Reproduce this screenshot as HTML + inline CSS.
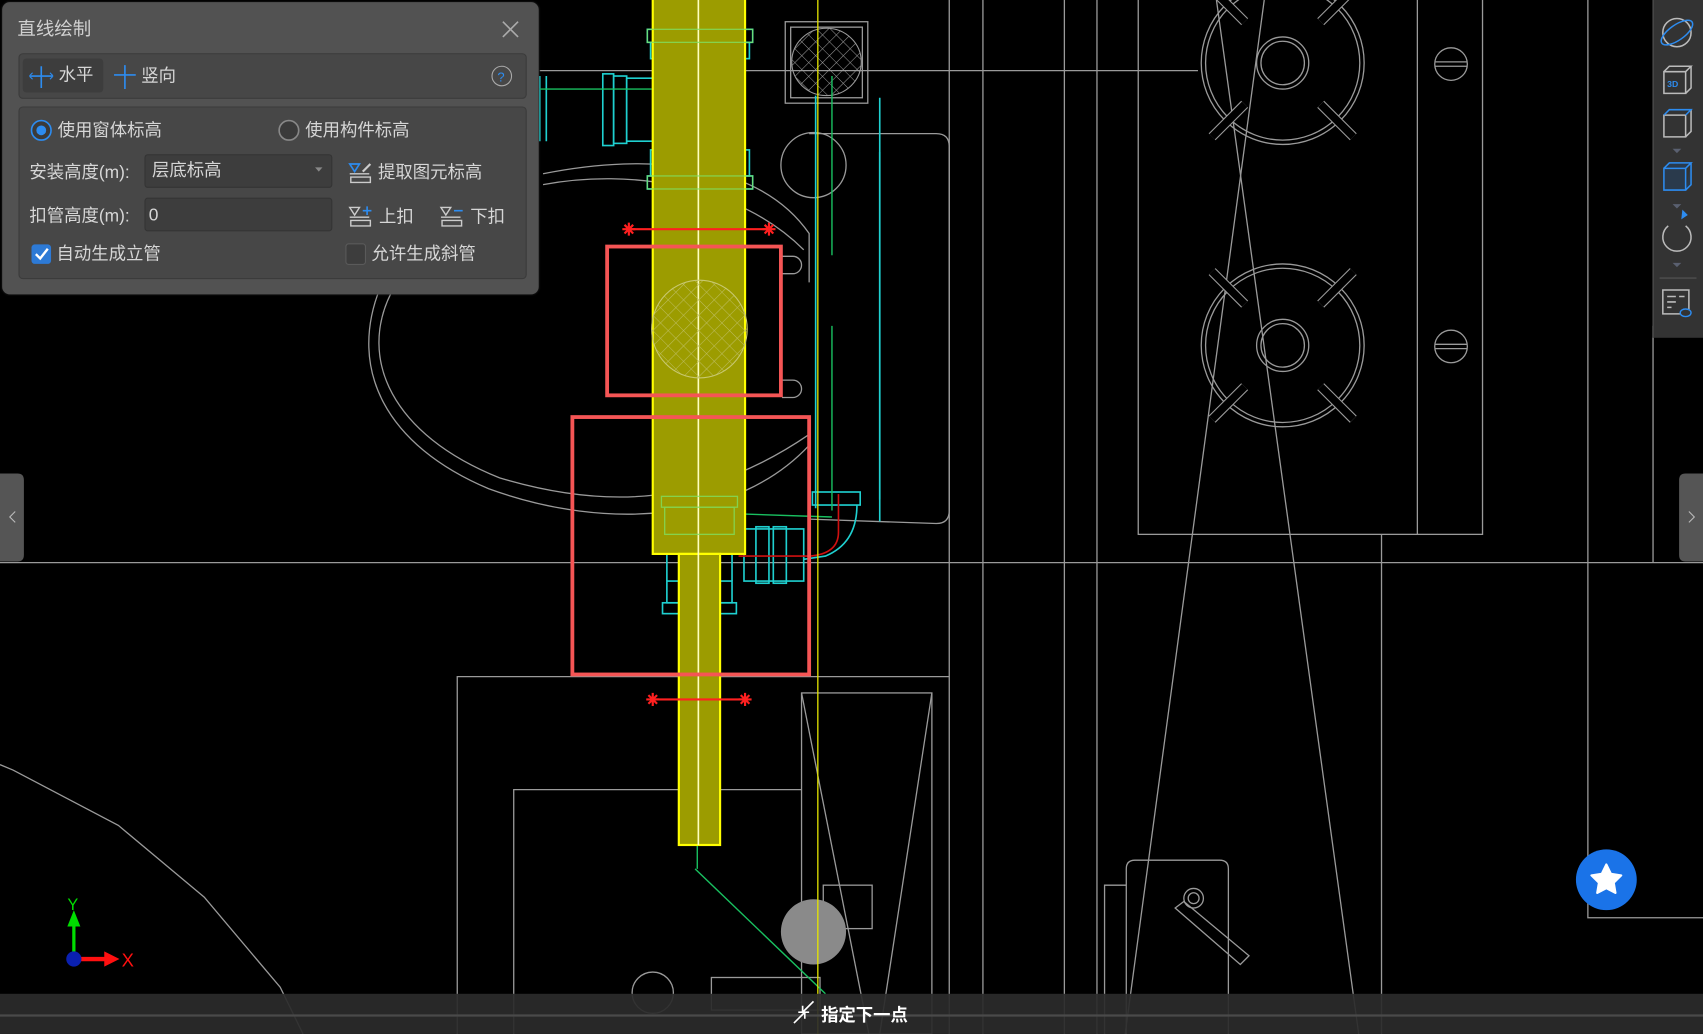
<!DOCTYPE html>
<html><head><meta charset="utf-8"><style>
html,body{margin:0;padding:0;background:#000;overflow:hidden;width:1703px;height:1034px}
#root{position:absolute;left:0;top:0;width:1568px;height:952px;transform:scale(1.08610);transform-origin:0 0;font-family:"Liberation Sans","Noto Sans CJK SC",sans-serif}
.abs{position:absolute}
#dlg{left:2px;top:2px;width:494px;height:269px;background:#525252;border-radius:7px;box-shadow:0 0 2px #222}
.box{position:absolute;left:15px;width:466px;background:#474747;border:1px solid #3b3b3b;border-radius:4px}
.t{position:absolute;color:#d6d6d6;font-size:16px;white-space:nowrap;line-height:20px}
.inp{position:absolute;background:#3d3d3d;border:1px solid #343434;border-radius:3px;height:29px}
</style></head><body><div id="root">
<svg class="abs" style="left:0;top:0" width="1568" height="952" viewBox="0 0 1568 952">
<defs>
<pattern id="hatch" width="10" height="10" patternUnits="userSpaceOnUse" patternTransform="rotate(45)">
<path d="M0 0H10M0 0V10" stroke="#bdbd60" stroke-width="1"/></pattern>
<pattern id="hatch2" width="9" height="9" patternUnits="userSpaceOnUse" patternTransform="rotate(45)">
<path d="M0 0H9M0 0V9" stroke="#999" stroke-width="1"/></pattern>
</defs>
<g stroke="#9a9a9a" stroke-width="1.2" fill="none">
<line x1="0" y1="518" x2="1568" y2="518"/>
<line x1="497" y1="65" x2="1103" y2="65"/>
<line x1="874" y1="0" x2="874" y2="952"/>
<line x1="905" y1="0" x2="905" y2="952"/>
<line x1="980" y1="0" x2="980" y2="952"/>
<line x1="1010" y1="0" x2="1010" y2="952"/>
<rect x="1048" y="-2" width="317" height="494"/>
<line x1="1305" y1="0" x2="1305" y2="492"/>
<line x1="1272" y1="492" x2="1272" y2="952"/>
<polyline points="1462,0 1462,845 1568,845"/>
<line x1="1522" y1="300" x2="1522" y2="518"/>
<line x1="1120" y1="0" x2="1251" y2="952"/>
<line x1="1164" y1="0" x2="1036" y2="952"/>
<circle cx="1181" cy="58" r="75"/><circle cx="1181" cy="58" r="71"/>
<circle cx="1181" cy="58" r="24"/><circle cx="1181" cy="58" r="20"/>
<circle cx="1181" cy="318" r="75"/><circle cx="1181" cy="318" r="71"/>
<circle cx="1181" cy="318" r="24"/><circle cx="1181" cy="318" r="20"/>
<g stroke-width="9" stroke="#9a9a9a"><path d="M1116 250l30 30M1246 250l-30 30M1116 386l30-30M1246 386l-30-30M1116 -10l30 30M1246 -10l-30 30M1116 126l30-30M1246 126l-30-30"/></g>
<g stroke-width="7" stroke="#000"><path d="M1116 250l30 30M1246 250l-30 30M1116 386l30-30M1246 386l-30-30M1116 -10l30 30M1246 -10l-30 30M1116 126l30-30M1246 126l-30-30"/></g>
<circle cx="1336" cy="59" r="15"/><path d="M1321 57h30M1321 61h30"/>
<circle cx="1336" cy="319" r="15"/><path d="M1321 317h30M1321 321h30"/>
<!-- left curves -->
<polyline points="0,704 12,709 109,760 188,826 258,909 279,952"/>
<path d="M500 160 C600 140 700 150 745 215 L745 260"/>
<path d="M500 170 C580 155 680 170 740 230"/>
<path d="M360 270 C330 330 360 400 460 440 C560 470 650 465 745 400"/>
<path d="M350 265 C320 340 355 410 450 450 C560 490 680 480 745 410"/>
<path d="M745 123 L862 123 Q874 123 874 135 L874 470 Q874 482 862 482 L745 478"/>
<circle cx="749" cy="152" r="30"/>
<path d="M720 236 h10 a8 8 0 0 1 0 16 h-10M720 350 h10 a8 8 0 0 1 0 16 h-10"/>
<rect x="723" y="20" width="76" height="75"/><rect x="728" y="25" width="66" height="65"/>
<polyline points="421,952 421,623 874,623"/>
<polyline points="473,952 473,727 738,727"/>
<rect x="738" y="638" width="120" height="314"/>
<line x1="738" y1="638" x2="800" y2="952"/><line x1="858" y1="638" x2="810" y2="952"/>
<circle cx="601" cy="914" r="19"/>
<rect x="655" y="900" width="100" height="30"/>
<rect x="758" y="815" width="45" height="40"/>
<path d="M1037 952 V800 Q1037 792 1045 792 H1123 Q1131 792 1131 800 V952"/>
<path d="M1017 952 V815 H1037"/>
<path d="M1090 830 l60 50 l-8 8 l-60 -52z"/><circle cx="1099" cy="827" r="9"/><circle cx="1099" cy="827" r="5"/>
</g>
<ellipse cx="761" cy="57" rx="32" ry="31" fill="url(#hatch2)" stroke="#999"/>
<circle cx="749" cy="858" r="30" fill="#8a8a8a"/>
<!-- cyan parts -->
<g stroke="#1fd0d0" stroke-width="1.5" fill="none">
<rect x="596" y="27" width="97" height="12"/><rect x="599" y="39" width="91" height="15"/>
<rect x="596" y="162" width="97" height="12"/><rect x="599" y="138" width="91" height="24"/>
<rect x="555" y="68" width="10" height="66"/><rect x="565" y="70" width="12" height="62"/><rect x="577" y="72" width="25" height="58"/>
<line x1="497" y1="70" x2="497" y2="130"/><line x1="503" y1="70" x2="503" y2="130"/>
<line x1="810" y1="90" x2="810" y2="480"/>
<line x1="810" y1="140" x2="810" y2="460"/>
<line x1="751" y1="88" x2="751" y2="468"/>
<rect x="748" y="453" width="44" height="12"/>
<path d="M789 465 Q789 500 760 512 L740 515"/>
<rect x="609" y="457" width="70" height="10"/><rect x="612" y="467" width="64" height="25"/>
<rect x="610" y="555" width="68" height="10"/><rect x="614" y="535" width="60" height="20"/>
<line x1="614" y1="510" x2="614" y2="535"/><line x1="674" y1="510" x2="674" y2="535"/>
<rect x="685" y="487" width="55" height="48"/><rect x="696" y="485" width="12" height="52"/><rect x="712" y="485" width="12" height="52"/>
</g>
<g stroke="#19c060" stroke-width="1.3" fill="none">
<line x1="497" y1="82" x2="600" y2="82"/>
<line x1="766" y1="70" x2="766" y2="235"/><line x1="766" y1="300" x2="766" y2="470"/>
<line x1="640" y1="800" x2="760" y2="915"/><line x1="642" y1="778" x2="642" y2="800"/>
<line x1="676" y1="473" x2="766" y2="476"/>
</g>
<path d="M772 455 V490 Q772 510 745 512 H680" stroke="#d01010" stroke-width="1.5" fill="none"/>
<!-- yellow pipe -->
<rect x="601" y="-2" width="85" height="512" fill="#9c9c00" stroke="#ffff00" stroke-width="2"/>
<rect x="625" y="510" width="38" height="268" fill="#9c9c00" stroke="#ffff00" stroke-width="2"/>
<line x1="643" y1="0" x2="643" y2="778" stroke="#ffffc0" stroke-width="1.5"/>
<line x1="753" y1="0" x2="753" y2="952" stroke="#e6e600" stroke-width="1.2"/>
<ellipse cx="644" cy="303" rx="44" ry="45" fill="url(#hatch)" stroke="#c8c870"/>
<g stroke="#80e060" stroke-width="1.2" fill="none" opacity=".8">
<rect x="596" y="27" width="97" height="12"/><rect x="596" y="162" width="97" height="12"/>
<rect x="609" y="457" width="70" height="10"/><rect x="612" y="467" width="64" height="25"/>
</g>
<!-- red markers -->
<g stroke="#ff2020" stroke-width="2" fill="none">
<line x1="579" y1="211" x2="708" y2="211"/><line x1="601" y1="644" x2="686" y2="644"/>
<path d="M573 211h12M579 205v12M575 207l8 8M583 207l-8 8M702 211h12M708 205v12M704 207l8 8M712 207l-8 8"/>
<path d="M595 644h12M601 638v12M597 640l8 8M605 640l-8 8M680 644h12M686 638v12M682 640l8 8M690 640l-8 8"/>
</g>
<rect x="559" y="227" width="160" height="137" fill="none" stroke="#f55555" stroke-width="3.5"/>
<rect x="527" y="384" width="218" height="237" fill="none" stroke="#f55555" stroke-width="3.5"/>
<!-- axis -->
<line x1="68" y1="883" x2="68" y2="850" stroke="#00dd00" stroke-width="3"/>
<path d="M62 853 L68 838 L74 853z" fill="#00dd00"/>
<text x="62" y="838" fill="#00dd00" font-size="15" font-family="Liberation Sans">Y</text>
<line x1="68" y1="883" x2="98" y2="883" stroke="#ff1010" stroke-width="4"/>
<path d="M96 876 L110 883 L96 890z" fill="#ff1010"/>
<text x="112" y="890" fill="#ff1010" font-size="17" font-family="Liberation Sans">X</text>
<circle cx="68" cy="883" r="7" fill="#0a20b0"/>
<!-- bottom bar -->
<rect x="0" y="915" width="1568" height="37" fill="#2b2b2b" fill-opacity=".93"/>
<line x1="0" y1="935" x2="1568" y2="935" stroke="#4a4a4a" stroke-width="2"/>
<path d="M731 942 L741 932 M741 932 v6 M741 932 h-6 M749 922 L739 932 M739 932 v-6 M739 932 h6" stroke="#fff" stroke-width="1.5" fill="none"/>
<text x="756" y="940" fill="#fff" font-size="16" font-weight="bold" font-family="Liberation Sans,Noto Sans CJK SC,sans-serif">指定下一点</text>
<!-- side tabs -->
<path d="M0 436 H16 Q22 436 22 442 V511 Q22 517 16 517 H0z" fill="#555"/>
<path d="M14 471 l-5 5 l5 5" stroke="#bbb" fill="none"/>
<path d="M1568 436 H1552 Q1546 436 1546 442 V511 Q1546 517 1552 517 H1568z" fill="#555"/>
<path d="M1555 471 l5 5 l-5 5" stroke="#bbb" fill="none"/>
<!-- star button -->
<circle cx="1479" cy="810" r="28" fill="#1a73e8"/>
<path d="M1479 796 l4.2 8.6 9.5 1.4 -6.9 6.7 1.6 9.4 -8.4 -4.4 -8.4 4.4 1.6 -9.4 -6.9 -6.7 9.5 -1.4z" fill="#fff" stroke="#fff" stroke-width="2" stroke-linejoin="round"/>
<!-- right toolbar -->
<rect x="1522" y="0" width="46" height="311" fill="#333"/>
<line x1="1522" y1="0" x2="1522" y2="311" stroke="#555"/>
<g fill="none" stroke-width="1.4">
<ellipse cx="1544" cy="30" rx="13" ry="13" stroke="#bbb"/>
<ellipse cx="1544" cy="30" rx="17" ry="7" transform="rotate(-35 1544 30)" stroke="#2d8cf0" stroke-dasharray="0 0"/>
<path d="M1532 66 h20 v20 h-20z M1532 66 l5 -5 h20 l-5 5 M1557 61 v20 l-5 5" stroke="#bbb"/>
<path d="M1532 106 h20 v20 h-20z M1557 101 v20 l-5 5" stroke="#bbb"/><path d="M1532 106 l5 -5 h20 l-5 5" stroke="#2d8cf0"/>
<path d="M1532 155 h20 v20 h-20z M1532 155 l5 -5 h20 l-5 5 M1557 150 v20 l-5 5" stroke="#2d8cf0" fill="#2a3a4c"/>
<path d="M1552 208 a13 13 0 1 1 -16 0" stroke="#bbb"/>
<path d="M1531 267 h24 v22 h-24z M1535 273 h8 M1535 278 h8 M1535 283 h4 M1546 273 h5" stroke="#bbb"/>
</g>
<text x="1535" y="80" fill="#2d8cf0" font-size="8" font-weight="bold" font-family="Liberation Sans">3D</text>
<path d="M1548 202 l6 -4 -5 -5z" fill="#2d8cf0"/>
<ellipse cx="1552" cy="288" rx="5" ry="3.5" fill="#333" stroke="#2d8cf0" stroke-width="1.3"/>
<g fill="#5a6070"><path d="M1540 137 h8 l-4 4z M1540 188 h8 l-4 4z M1540 242 h8 l-4 4z"/></g>
<line x1="1528" y1="256" x2="1562" y2="256" stroke="#555"/>
</svg>

<div id="dlg" class="abs">
<div class="t" style="left:14px;top:15px;font-size:17px;color:#d0d0d0">直线绘制</div>
<svg class="abs" style="left:460px;top:17px" width="16" height="16"><path d="M1 1L15 15M15 1L1 15" stroke="#aaa" stroke-width="1.5"/></svg>
<div class="box" style="top:47px;height:40px">
 <div class="abs" style="left:3px;top:4px;width:74px;height:31px;background:#3d3d3d;border-radius:3px"></div>
 <svg class="abs" style="left:9px;top:10px" width="22" height="22"><path d="M1 10h20M11 1v20" stroke="#2d8cf0" stroke-width="1.5"/><path d="M3 7l-3 3 3 3M19 7l3 3-3 3" stroke="#2d8cf0" fill="none"/></svg>
 <div class="t" style="left:36px;top:10px">水平</div>
 <svg class="abs" style="left:86px;top:9px" width="22" height="24"><path d="M1 10h20M11 1v22" stroke="#2d8cf0" stroke-width="1.5"/></svg>
 <div class="t" style="left:112px;top:11px">竖向</div>
 <svg class="abs" style="left:434px;top:10px" width="20" height="20"><circle cx="10" cy="10" r="9" stroke="#aaa" fill="none"/><text x="6" y="15" fill="#2d8cf0" font-size="12" font-family="Liberation Sans">?</text></svg>
</div>
<div class="box" style="top:96px;height:157px">
 <svg class="abs" style="left:10px;top:11px" width="22" height="22"><circle cx="10" cy="10" r="9" stroke="#2d8cf0" stroke-width="1.5" fill="#3a3a3a"/><circle cx="10" cy="10" r="4.5" fill="#2d8cf0"/></svg>
 <div class="t" style="left:35px;top:12px">使用窗体标高</div>
 <svg class="abs" style="left:238px;top:11px" width="22" height="22"><circle cx="10" cy="10" r="9" stroke="#888" stroke-width="1.5" fill="#3a3a3a"/></svg>
 <div class="t" style="left:263px;top:12px">使用构件标高</div>
 <div class="t" style="left:9px;top:51px">安装高度(m):</div>
 <div class="inp" style="left:115px;top:43px;width:171px"></div>
 <div class="t" style="left:122px;top:49px">层底标高</div>
 <svg class="abs" style="left:272px;top:55px" width="8" height="6"><path d="M0 0h7l-3.5 4z" fill="#888"/></svg>
 <svg class="abs" style="left:302px;top:49px" width="26" height="22"><path d="M2 3h9l-4.5 7z" stroke="#2d8cf0" fill="none" stroke-width="1.5"/><path d="M2 12h18M3 15h18v5h-18z" stroke="#ccc" fill="none" stroke-width="1.3"/><path d="M14 10l7 -7" stroke="#ccc" stroke-width="2"/></svg>
 <div class="t" style="left:330px;top:51px">提取图元标高</div>
 <div class="t" style="left:9px;top:91px">扣管高度(m):</div>
 <div class="inp" style="left:115px;top:83px;width:171px"></div>
 <div class="t" style="left:119px;top:90px">0</div>
 <svg class="abs" style="left:302px;top:89px" width="26" height="22"><path d="M2 3h9l-4.5 7z" stroke="#ccc" fill="none" stroke-width="1.3"/><path d="M2 12h18M3 15h18v5h-18z" stroke="#ccc" fill="none" stroke-width="1.3"/><path d="M14 6h8M18 2v8" stroke="#2d8cf0" stroke-width="1.5"/></svg>
 <div class="t" style="left:331px;top:92px">上扣</div>
 <svg class="abs" style="left:386px;top:89px" width="26" height="22"><path d="M2 3h9l-4.5 7z" stroke="#ccc" fill="none" stroke-width="1.3"/><path d="M2 12h18M3 15h18v5h-18z" stroke="#ccc" fill="none" stroke-width="1.3"/><path d="M14 6h8" stroke="#2d8cf0" stroke-width="1.5"/></svg>
 <div class="t" style="left:415px;top:92px">下扣</div>
 <div class="abs" style="left:11px;top:126px;width:18px;height:18px;background:#2d7ad6;border-radius:3px"></div>
 <svg class="abs" style="left:11px;top:126px" width="18" height="18"><path d="M4 9l4 4 7-9" stroke="#fff" stroke-width="2.2" fill="none"/></svg>
 <div class="t" style="left:34px;top:126px">自动生成立管</div>
 <div class="abs" style="left:300px;top:125px;width:17px;height:18px;background:#3d3d3d;border:1px solid #5a5a5a;border-radius:3px"></div>
 <div class="t" style="left:324px;top:126px">允许生成斜管</div>
</div>
</div>
</div></body></html>
